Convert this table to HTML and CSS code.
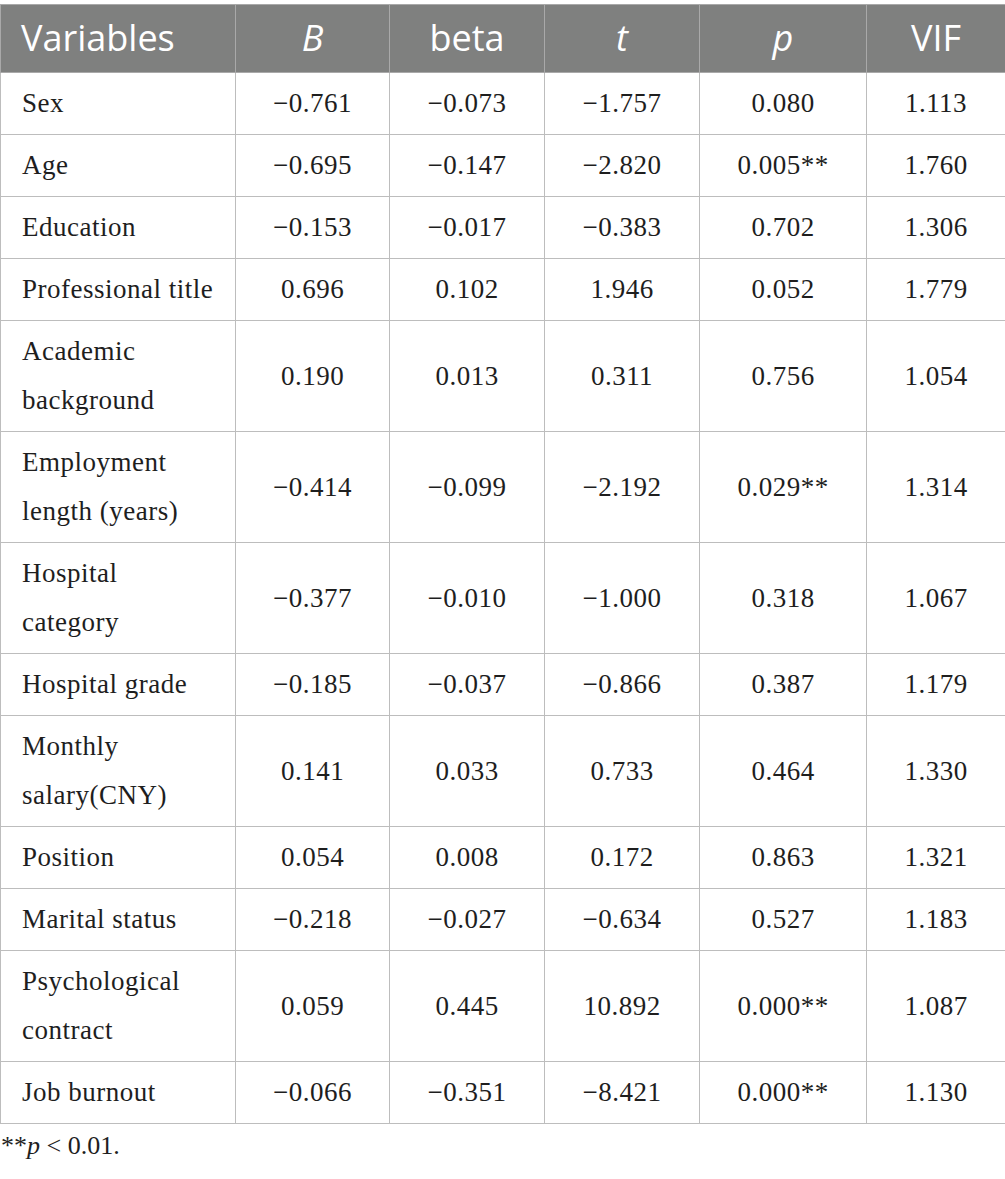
FILE: index.html
```html
<!DOCTYPE html>
<html>
<head>
<meta charset="utf-8">
<link rel="stylesheet" href="styles.css">
</head>
<body>
<div class="page">
<table class="data">
<colgroup>
<col class="c-var"><col class="c-b"><col class="c-beta"><col class="c-t"><col class="c-p"><col class="c-vif">
</colgroup>
<thead>
<tr><th class="left">Variables</th><th><i>B</i></th><th>beta</th><th><i>t</i></th><th><i>p</i></th><th>VIF</th></tr>
</thead>
<tbody>
<tr><td class="left">Sex</td><td>−0.761</td><td>−0.073</td><td>−1.757</td><td>0.080</td><td>1.113</td></tr>
<tr><td class="left">Age</td><td>−0.695</td><td>−0.147</td><td>−2.820</td><td>0.005**</td><td>1.760</td></tr>
<tr><td class="left">Education</td><td>−0.153</td><td>−0.017</td><td>−0.383</td><td>0.702</td><td>1.306</td></tr>
<tr><td class="left">Professional title</td><td>0.696</td><td>0.102</td><td>1.946</td><td>0.052</td><td>1.779</td></tr>
<tr><td class="left">Academic<br>background</td><td>0.190</td><td>0.013</td><td>0.311</td><td>0.756</td><td>1.054</td></tr>
<tr><td class="left">Employment<br>length (years)</td><td>−0.414</td><td>−0.099</td><td>−2.192</td><td>0.029**</td><td>1.314</td></tr>
<tr><td class="left">Hospital<br>category</td><td>−0.377</td><td>−0.010</td><td>−1.000</td><td>0.318</td><td>1.067</td></tr>
<tr><td class="left">Hospital grade</td><td>−0.185</td><td>−0.037</td><td>−0.866</td><td>0.387</td><td>1.179</td></tr>
<tr><td class="left">Monthly<br>salary(CNY)</td><td>0.141</td><td>0.033</td><td>0.733</td><td>0.464</td><td>1.330</td></tr>
<tr><td class="left">Position</td><td>0.054</td><td>0.008</td><td>0.172</td><td>0.863</td><td>1.321</td></tr>
<tr><td class="left">Marital status</td><td>−0.218</td><td>−0.027</td><td>−0.634</td><td>0.527</td><td>1.183</td></tr>
<tr><td class="left">Psychological<br>contract</td><td>0.059</td><td>0.445</td><td>10.892</td><td>0.000**</td><td>1.087</td></tr>
<tr><td class="left">Job burnout</td><td>−0.066</td><td>−0.351</td><td>−8.421</td><td>0.000**</td><td>1.130</td></tr>
</tbody>
</table>
<p class="note">**<i>p</i> &lt; 0.01.</p>
</div>
</body>
</html>
```
FILE: styles.css
```css
html, body {
  margin: 0;
  padding: 0;
  background: #ffffff;
}
.page {
  padding-top: 4px;
  width: 1005px;
}
.data {
  width: 1005px;
  border-collapse: collapse;
  table-layout: fixed;
  font-family: "Liberation Serif", "Times New Roman", serif;
  font-size: 27px;
  letter-spacing: 0.5px;
  color: #1e1e1e;
}
.c-var { width: 235px; }
.c-b { width: 154px; }
.c-beta { width: 155px; }
.c-t { width: 155px; }
.c-p { width: 167px; }
.c-vif { width: 139px; }
.data th {
  background: #7f807f;
  color: #ffffff;
  font-family: "Open Sans", "Liberation Sans", sans-serif;
  font-weight: 400;
  font-size: 36px;
  letter-spacing: 0;
  line-height: 46px;
  padding: 10px 10px 11px;
  text-align: center;
  border: 1px solid #a9a9a9;
}
.data th.left {
  text-align: left;
  padding-left: 20px;
}
.data td {
  border: 1px solid #bdbdbd;
  line-height: 49px;
  padding: 6px 10px;
  text-align: center;
  vertical-align: middle;
}
.data td.left {
  text-align: left;
  padding-left: 21px;
}
.note {
  margin: 7px 0 0 1px;
  font-family: "Liberation Serif", "Times New Roman", serif;
  font-size: 26px;
  line-height: 30px;
  color: #1e1e1e;
}
```
